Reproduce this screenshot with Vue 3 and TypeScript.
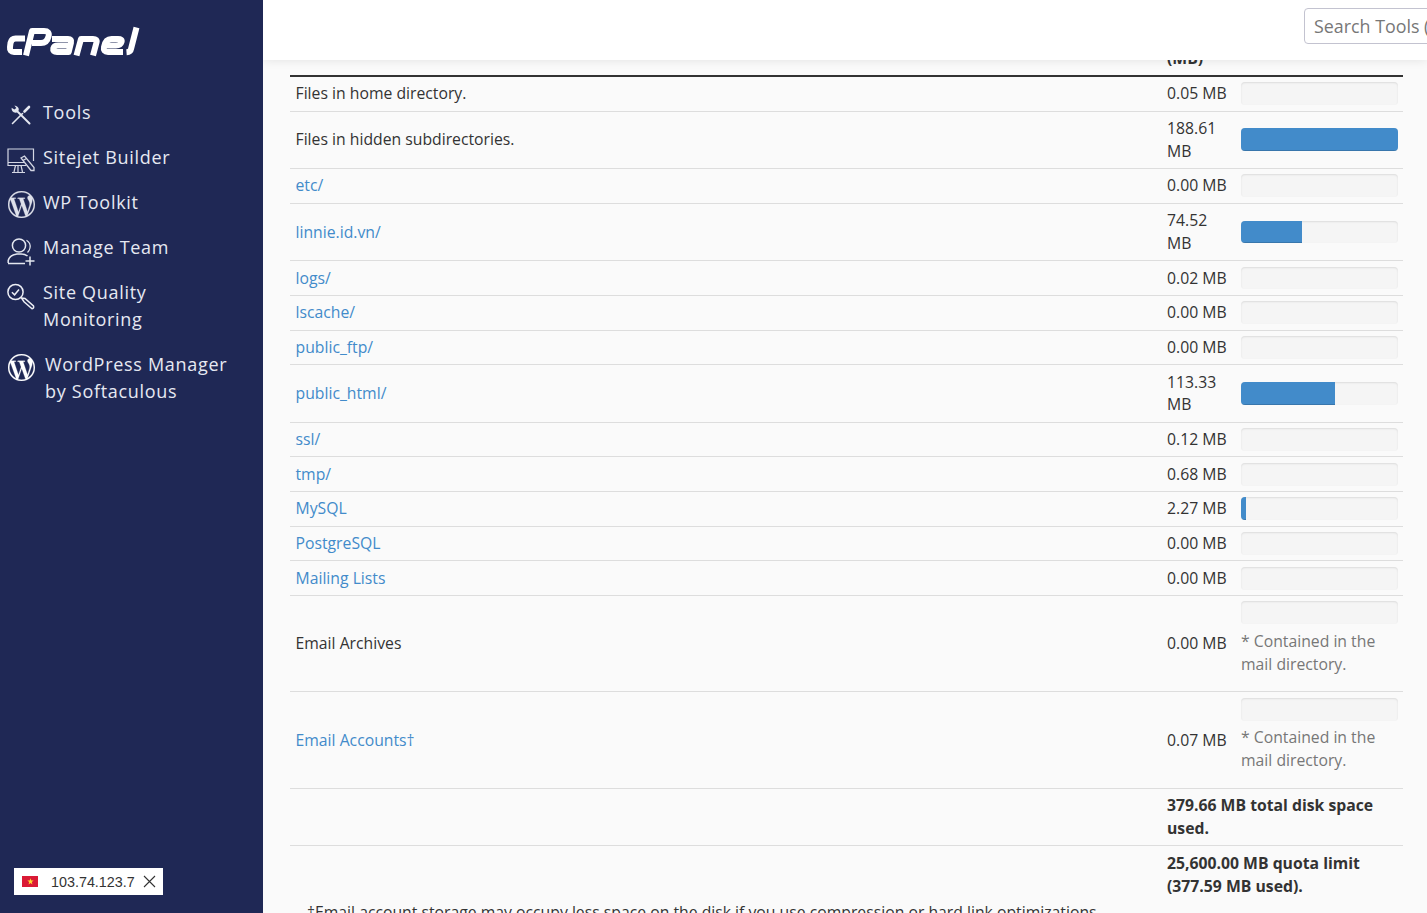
<script setup lang="ts">
interface DiskRow {
  name: string
  link: boolean
  size: string
  pct?: number
  note?: boolean
}

const navItems = [
  { id: 'tools', lines: ['Tools'] },
  { id: 'sitejet', lines: ['Sitejet Builder'] },
  { id: 'wp', lines: ['WP Toolkit'] },
  { id: 'team', lines: ['Manage Team'] },
  { id: 'quality', lines: ['Site Quality', 'Monitoring'] },
  { id: 'softaculous', lines: ['WordPress Manager', 'by Softaculous'] },
]

const wpMark =
  'M21.469 6.825c.84 1.537 1.318 3.3 1.318 5.175 0 3.979-2.156 7.456-5.363 9.325l3.295-9.527c.615-1.54.82-2.771.82-3.864 0-.405-.026-.78-.07-1.11m-7.981.105c.647-.03 1.232-.105 1.232-.105.582-.075.514-.93-.067-.899 0 0-1.755.135-2.88.135-1.064 0-2.85-.15-2.85-.15-.585-.03-.661.855-.075.885 0 0 .54.061 1.125.09l1.68 4.605-2.37 7.08L5.354 6.9c.649-.03 1.234-.1 1.234-.1.585-.075.516-.93-.065-.896 0 0-1.746.138-2.874.138-.2 0-.438-.008-.69-.015C4.911 3.15 8.235 1.215 12 1.215c2.809 0 5.365 1.072 7.286 2.833-.046-.003-.091-.009-.141-.009-1.06 0-1.812.923-1.812 1.914 0 .89.513 1.643 1.06 2.531.411.72.89 1.643.89 2.977 0 .915-.354 1.994-.821 3.479l-1.075 3.585-3.9-11.61.001.014zM12 22.784c-1.059 0-2.081-.153-3.048-.437l3.237-9.406 3.315 9.087c.024.053.05.101.078.149-1.12.393-2.325.609-3.582.609M1.211 12c0-1.564.336-3.05.935-4.39L7.29 21.709C3.694 19.96 1.212 16.271 1.211 12M12 0C5.385 0 0 5.385 0 12s5.385 12 12 12 12-5.385 12-12S18.615 0 12 0'

const rows: DiskRow[] = [
  { name: 'Files in home directory.', link: false, size: '0.05 MB', pct: 0 },
  { name: 'Files in hidden subdirectories.', link: false, size: '188.61 MB', pct: 100 },
  { name: 'etc/', link: true, size: '0.00 MB', pct: 0 },
  { name: 'linnie.id.vn/', link: true, size: '74.52 MB', pct: 39 },
  { name: 'logs/', link: true, size: '0.02 MB', pct: 0 },
  { name: 'lscache/', link: true, size: '0.00 MB', pct: 0 },
  { name: 'public_ftp/', link: true, size: '0.00 MB', pct: 0 },
  { name: 'public_html/', link: true, size: '113.33 MB', pct: 60 },
  { name: 'ssl/', link: true, size: '0.12 MB', pct: 0 },
  { name: 'tmp/', link: true, size: '0.68 MB', pct: 0 },
  { name: 'MySQL', link: true, size: '2.27 MB', pct: 3 },
  { name: 'PostgreSQL', link: true, size: '0.00 MB', pct: 0 },
  { name: 'Mailing Lists', link: true, size: '0.00 MB', pct: 0 },
  { name: 'Email Archives', link: false, size: '0.00 MB', pct: 0, note: true },
  { name: 'Email Accounts†', link: true, size: '0.07 MB', pct: 0, note: true },
]
</script>

<template>
  <div class="page">
    <aside class="sidebar">
      <svg class="logo" viewBox="0 24 142 34" width="142" height="34" aria-label="cPanel">
        <g fill="none" stroke="#fff" stroke-width="6" stroke-linejoin="round" stroke-linecap="butt">
          <path d="M25 38.5H15.5Q11.5 38.5 10.5 43L10 47Q9.5 52 14 52H22" />
          <path d="M26 55.5L32 31H44Q50 31 48.5 36.5Q47 43 41 43H32" />
          <path d="M52 39H68Q72 39 71 42.5L68.7 52H57Q52.5 52 53.3 48.5Q54 45.5 58 45.5H69" />
          <path d="M76.5 55.5L81 39H93Q97.5 39 96.5 42.5L93 55.5" />
          <path d="M123 52H108Q103 52 104 47Q105.5 39 111.5 39H118Q122.5 39 121.5 42Q120.5 45.5 116 45.5H105" />
          <path d="M136.5 27.5L131 49Q130.5 52 126.5 52.3" />
        </g>
      </svg>
      <nav class="nav">
        <a v-for="item in navItems" :key="item.id" class="nav-item" :class="item.id">
          <span class="nav-icon">
            <svg v-if="item.id === 'tools'" viewBox="0 0 20 20" width="20" height="20" fill="none" stroke="#e4e7f0" stroke-linecap="round">
              <path d="M7 7L18.5 18.5" stroke-width="2" />
              <path d="M.6 2.8Q.3 7.2 4.6 7.8Q7.8 7.6 7.8 4Q7.2 1 3.4.4L5.3 3.1L3.4 4.6Z" fill="#e4e7f0" stroke="none" />
              <path d="M1.5 18.5L11.5 8.5" stroke-width="1.6" />
              <path d="M13.5 6.5L18 2" stroke-width="2.6" />
            </svg>
            <svg v-else-if="item.id === 'sitejet'" viewBox="0 0 28 27" width="28" height="27" fill="none" stroke="#d4d7e4" stroke-width="1.2">
              <path d="M26.5 13V1H1V17.5H19" />
              <path d="M1 14.5H17M11 17.5V24M7 24L8.5 17.5M15.5 24L14 17.5M5 24.5H18" />
              <path d="M14 10L17.5 8L27 19.5L27 22.5L24 22.5Z" fill="#1f2855" stroke-width="1.3" />
              <path d="M16 12.5L19.5 10.5" />
            </svg>
            <svg v-else-if="item.id === 'wp' || item.id === 'softaculous'" viewBox="0 0 24 24" width="27" height="27">
              <path :fill="item.id === 'wp' ? '#dde0ea' : '#fff'" :stroke="item.id === 'wp' ? '#dde0ea' : '#fff'" stroke-width="0.2" :d="wpMark" />
            </svg>
            <svg v-else-if="item.id === 'team'" viewBox="0 0 28 28" width="28" height="28" fill="none" stroke="#e4e7f0" stroke-width="1.5">
              <circle cx="12" cy="7.5" r="6.6" />
              <path d="M19.5 2.2Q24 5 23 10Q22.5 12.5 20.5 14.5" stroke-width="1.2" />
              <path d="M1.2 25V22.5Q2.5 17 10 16H14Q18 16 20.5 18" />
              <path d="M1 25.5H18M23 18.5V27.5M18.5 23H27.5" />
            </svg>
            <svg v-else viewBox="0 0 28 28" width="28" height="28" fill="none" stroke="#eceef5" stroke-width="1.5">
              <circle cx="8.5" cy="9" r="7.6" />
              <path d="M4.9 9.2L7.6 11.8L12 6.6" stroke-width="1.5" />
              <path d="M14.5 15L18 15.5L26.5 23Q27.3 25.3 25 25.8L17 18.7Z" />
            </svg>
          </span>
          <span class="nav-label">
            <span v-for="line in item.lines" :key="line" class="nav-line">{{ line }}</span>
          </span>
        </a>
      </nav>
      <div class="ip-chip">
        <span class="flag">
          <svg viewBox="0 0 10 10" width="7" height="7"><path fill="#ffd92e" d="M5 .5l1.2 3.2h3.3L6.8 5.8l1 3.4L5 7.2 2.2 9.2l1-3.4L.5 3.7h3.3z" /></svg>
        </span>
        <span class="ip-text">103.74.123.7</span>
        <svg class="ip-close" viewBox="0 0 13 13" width="13" height="13" fill="none" stroke="#333" stroke-width="1.1">
          <path d="M1 1L12 12M12 1L1 12" />
        </svg>
      </div>
    </aside>

    <main class="main">
      <header class="topbar">
        <input class="search" type="text" placeholder="Search Tools (/)" />
      </header>

      <div class="content">
        <table class="usage">
          <colgroup>
            <col />
            <col class="col-size" />
            <col class="col-bar" />
          </colgroup>
          <thead>
            <tr>
              <th></th>
              <th>Usage (MB)</th>
              <th></th>
            </tr>
          </thead>
          <tbody>
            <tr v-for="row in rows" :key="row.name">
              <td class="name-cell">
                <a v-if="row.link" class="link">{{ row.name }}</a>
                <template v-else>{{ row.name }}</template>
              </td>
              <td>{{ row.size }}</td>
              <td>
                <div class="bar">
                  <div v-if="row.pct" class="bar-fill" :style="{ width: row.pct + '%' }"></div>
                </div>
                <div v-if="row.note" class="note">* Contained in the mail directory.</div>
              </td>
            </tr>
            <tr>
              <td></td>
              <td colspan="2" class="total">379.66 MB total disk space used.</td>
            </tr>
            <tr class="last">
              <td></td>
              <td colspan="2" class="total">25,600.00 MB quota limit (377.59 MB used).</td>
            </tr>
          </tbody>
        </table>
        <p class="footnote">†Email account storage may occupy less space on the disk if you use compression or hard link optimizations.</p>
      </div>
    </main>
  </div>
</template>

<style>
html,
body {
  margin: 0;
  height: 100%;
  overflow: hidden;
}
</style>

<style scoped>
.page {
  display: flex;
  height: 913px;
  overflow: hidden;
  font-family: "Open Sans", sans-serif;
  font-size: 15.75px;
  color: #333;
}

.sidebar {
  position: relative;
  flex: 0 0 263px;
  box-sizing: border-box;
  background: #1f2855;
  color: #e6e9f2;
  display: flex;
  flex-direction: column;
  padding-top: 24px;
}

.logo {
  display: block;
}

.nav {
  display: flex;
  flex-direction: column;
  margin-top: 35px;
}

.nav-item {
  display: flex;
  align-items: flex-start;
  padding: 6px 7px;
  gap: 8px;
  font-size: 18px;
  line-height: 27px;
  letter-spacing: 0.7px;
  margin-bottom: 6px;
}

.nav-item.softaculous {
  gap: 10px;
}

.nav-icon {
  flex: 0 0 28px;
  height: 27px;
  display: flex;
  align-items: center;
  justify-content: center;
}

/* icons sit a bit below the text line, without pushing the row taller */
.sitejet .nav-icon,
.team .nav-icon,
.quality .nav-icon {
  transform: translateY(4px);
}

.tools .nav-icon,
.wp .nav-icon {
  transform: translateY(2px);
}

.softaculous .nav-icon {
  transform: translateY(3px);
}

.nav-line {
  display: block;
}

.ip-chip {
  position: absolute;
  left: 14px;
  bottom: 18px;
  width: 149px;
  height: 27px;
  box-sizing: border-box;
  background: #fff;
  display: flex;
  align-items: center;
  padding-left: 8px;
  font-family: "Liberation Sans", Arial, sans-serif;
  font-size: 14.35px;
  color: #333;
}

.flag {
  width: 16px;
  height: 11px;
  background: #da1a35;
  display: flex;
  align-items: center;
  justify-content: center;
}

.ip-text {
  margin-left: 13px;
}

.ip-close {
  margin-left: 8px;
}

.main {
  position: relative;
  flex: 1;
  min-width: 0;
  background: #fafafa;
  overflow: hidden;
}

.topbar {
  position: absolute;
  top: 0;
  left: 0;
  right: 0;
  height: 60px;
  background: #fff;
  box-shadow: 0 0 10px rgba(0, 0, 0, 0.1);
  z-index: 2;
}

.search {
  position: absolute;
  left: 1041px;
  top: 8px;
  width: 200px;
  height: 36px;
  box-sizing: border-box;
  padding: 0 9px;
  border: 1px solid #c3c3d0;
  border-radius: 4px;
  background: #fff;
  font-family: "Open Sans", sans-serif;
  font-size: 17.85px;
  outline: none;
}

.search::placeholder {
  color: #777;
  opacity: 1;
}

.content {
  padding: 0 24px 0 27px;
}

.usage {
  width: 1113px;
  table-layout: fixed;
  border-collapse: collapse;
  line-height: 22.8px;
}

.col-size {
  width: 74px;
}

.col-bar {
  width: 167px;
}

.usage th {
  padding: 24.3px 5px 5px;
  vertical-align: bottom;
  text-align: left;
  font-weight: 700;
  border-bottom: 2px solid #333;
}

.usage td {
  padding: 5.45px 5px;
  vertical-align: middle;
  border-bottom: 1px solid #ddd;
}

.usage td.name-cell {
  padding-left: 5.5px;
}

.usage .last td {
  border-bottom: none;
}

.link {
  color: #428bca;
}

.bar {
  height: 22.8px;
  border-radius: 4px;
  background: #f5f5f5;
  box-shadow: inset 0 1px 2px rgba(0, 0, 0, 0.1);
  overflow: hidden;
}

.bar-fill {
  height: 100%;
  background: #428bca;
  box-shadow: inset 0 -1px 0 rgba(0, 0, 0, 0.15);
}

.note {
  margin: 5.6px 0 10.6px;
  color: #777;
}

.total {
  font-weight: 700;
}

.footnote {
  margin: -1.6px 0 0 17px;
  line-height: 22.8px;
}
</style>
